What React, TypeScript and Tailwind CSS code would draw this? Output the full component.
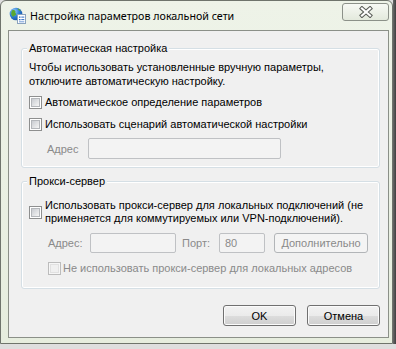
import React from 'react';

function Check({ disabled }: { disabled?: boolean }) {
  return (
    <span
      className={
        disabled
          ? 'flex h-[13px] w-[13px] shrink-0 items-center justify-center border border-[#bcbcbc] bg-[#f6f6f6]'
          : 'flex h-[13px] w-[13px] shrink-0 items-center justify-center border border-[#8e8f8f] bg-white'
      }
    >
      <span
        className={
          disabled
            ? 'h-[9px] w-[9px] border border-[#e1e1e1] bg-[#f0f0f0]'
            : 'h-[9px] w-[9px] border border-[#b4b7bb] bg-[linear-gradient(135deg,#c9ccd1,#f5f5f5)]'
        }
      />
    </span>
  );
}

function TextBox({ className, value }: { className: string; value?: string }) {
  return (
    <div
      className={`flex items-center rounded-[2px] border border-[#bfc1c4] bg-[#f3f3f3] px-[5px] text-[#8a8a8a] ${className}`}
    >
      {value}
    </div>
  );
}

function Button({ label, disabled, className }: { label: string; disabled?: boolean; className: string }) {
  return (
    <button
      className={
        disabled
          ? `flex items-center justify-center rounded-[3px] border border-[#b2b5b8] bg-[#f4f4f4] text-[#8a8a8a] ${className}`
          : `flex items-center justify-center rounded-[3px] border border-[#707070] bg-[linear-gradient(#f2f2f2_0%,#ebebeb_50%,#dddddd_51%,#cfcfcf_100%)] text-black shadow-[inset_0_0_0_1px_#fbfbfb] ${className}`
      }
    >
      {label}
    </button>
  );
}

function WindowIcon() {
  return (
    <svg width="18" height="18" viewBox="0 0 18 18">
      <defs>
        <radialGradient id="globe" cx="0.35" cy="0.3" r="0.8">
          <stop offset="0" stopColor="#9fd3ff" />
          <stop offset="0.5" stopColor="#2f7fd6" />
          <stop offset="1" stopColor="#134f9e" />
        </radialGradient>
      </defs>
      <circle cx="7" cy="7" r="6.3" fill="url(#globe)" />
      <path d="M3 3.5c1.5-.8 2.8-.3 3.4.6.4.8-.4 1.4.3 2.2.8.8.3 2-.7 2.3-.9.3-1.2 1.4-2 1.2C2.6 9 2 7.4 2.2 6c.1-1 .3-1.8.8-2.5z" fill="#5aa832" />
      <path d="M8.5 1.4c1.4.3 2.6 1.1 3.4 2.3-.7.3-1.5.1-2-.5-.5-.5-1.2-.9-1.4-1.8z" fill="#5aa832" />
      <rect x="8.5" y="7.5" width="8" height="9" fill="#ffffff" stroke="#8aa3bd" strokeWidth="1" />
      <rect x="10" y="9.5" width="1.5" height="1.3" fill="#2f6fc4" />
      <rect x="12.3" y="9.6" width="3" height="1" fill="#2f6fc4" />
      <rect x="10" y="12" width="1.5" height="1.3" fill="#2f6fc4" />
      <rect x="12.3" y="12.1" width="3" height="1" fill="#2f6fc4" />
      <rect x="10" y="14.3" width="5.3" height="1" fill="#6f9ad6" />
    </svg>
  );
}

function CloseGlyph() {
  return (
    <svg width="16" height="12" viewBox="0 0 16 12">
      <path d="M4 2.5 L12 9.5 M12 2.5 L4 9.5" stroke="#5a5d58" strokeWidth="4.2" strokeLinecap="square" />
      <path d="M4 2.5 L12 9.5 M12 2.5 L4 9.5" stroke="#ffffff" strokeWidth="2.2" strokeLinecap="square" />
    </svg>
  );
}

export default function App() {
  return (
    <div className="flex h-[349px] w-[396px] flex-col bg-[#dedede] font-['Liberation_Sans',Arial,sans-serif] text-[11px] leading-[16px] text-black">
      <div className="flex h-[344px]">
        <div className="flex w-[393px] flex-col rounded-t-[6px] border border-[#6f746c] bg-[linear-gradient(#eef3e8,#e6edde)] pb-[5px] pl-[7px] pr-[3px]">
          {/* title bar */}
          <div className="flex h-[29px] shrink-0 items-start">
            <div className="ml-[1px] mt-[6px]">
              <WindowIcon />
            </div>
            <div className="ml-[3px] mt-[7px] whitespace-nowrap font-['Noto_Sans',sans-serif] text-[10.7px] text-black">
              Настройка параметров локальной сети
            </div>
            <div className="ml-auto mt-[2px] flex h-[18px] w-[47px] items-center justify-center rounded-[3px] border border-[#8c9189] bg-[linear-gradient(#f7f9f4,#e3e9dc)]">
              <CloseGlyph />
            </div>
          </div>

          {/* client area */}
          <div className="flex flex-1 flex-col whitespace-nowrap border border-[#8b9088] bg-[#f0f0f0] pl-[12px] pr-[8px]">
            <fieldset className="mt-[9px] rounded-[3px] border border-[#d5dfe5] pb-[8px] shadow-[inset_0_0_0_1px_#ffffff]">
              <legend className="ml-[5px] bg-[#f0f0f0] px-[2px] leading-[16px]">Автоматическая настройка</legend>
              <div className="mt-[4px] pl-[7px] leading-[14px]">
                Чтобы использовать установленные вручную параметры,
                <br />
                отключите автоматическую настройку.
              </div>
              <div className="mt-[6px] flex h-[16px] items-center gap-[3px] pl-[7px]">
                <Check />
                <span>Автоматическое определение параметров</span>
              </div>
              <div className="mt-[6px] flex h-[16px] items-center gap-[3px] pl-[7px]">
                <Check />
                <span>Использовать сценарий автоматической настройки</span>
              </div>
              <div className="mt-[6px] flex items-center pl-[25px]">
                <span className="w-[41px] text-[#8a8a8a]">Адрес</span>
                <TextBox className="h-[21px] w-[193px]" />
              </div>
            </fieldset>

            <fieldset className="mt-[5px] rounded-[3px] border border-[#d5dfe5] pb-[12px] shadow-[inset_0_0_0_1px_#ffffff]">
              <legend className="ml-[5px] bg-[#f0f0f0] px-[2px] leading-[16px]">Прокси-сервер</legend>
              <div className="mt-[10px] flex items-center gap-[3px] pl-[7px]">
                <Check />
                <span className="leading-[13px]">
                  Использовать прокси-сервер для локальных подключений (не
                  <br />
                  применяется для коммутируемых или VPN-подключений).
                </span>
              </div>
              <div className="mt-[8px] flex items-center pl-[26px]">
                <span className="w-[42px] text-[#8a8a8a]">Адрес:</span>
                <TextBox className="h-[20px] w-[86px]" />
                <span className="ml-[6px] w-[37px] text-[#8a8a8a]">Порт:</span>
                <TextBox className="h-[20px] w-[46px]" value="80" />
                <Button label="Дополнительно" disabled className="ml-[9px] h-[20px] w-[94px]" />
              </div>
              <div className="mt-[7px] flex h-[16px] items-center gap-[2px] pl-[26px]">
                <Check disabled />
                <span className="text-[#8a8a8a]">Не использовать прокси-сервер для локальных адресов</span>
              </div>
            </fieldset>

            <div className="mt-[16px] flex justify-end gap-[11px]">
              <Button label="OK" className="h-[21px] w-[73px]" />
              <Button label="Отмена" className="h-[21px] w-[73px]" />
            </div>
          </div>
        </div>
        <div className="w-[3px] bg-[linear-gradient(90deg,#6a6a6a,#3e3e3e)]" />
      </div>
    </div>
  );
}
